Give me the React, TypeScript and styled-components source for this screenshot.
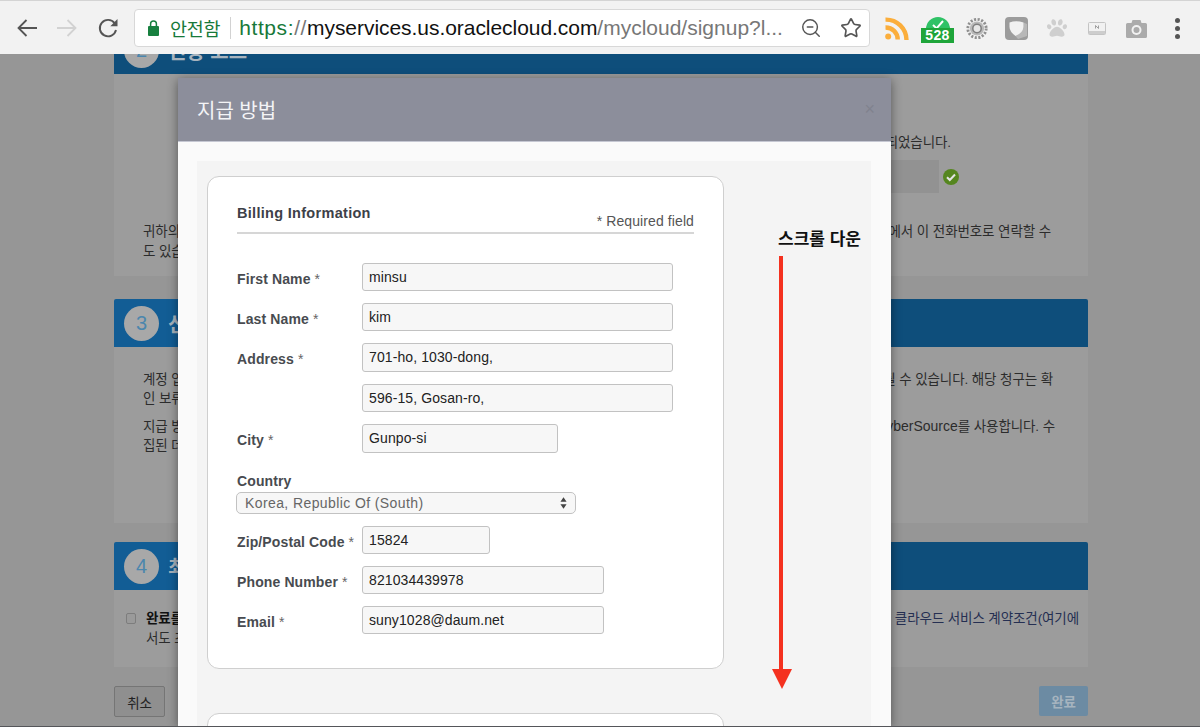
import React from 'react'
import styled, { createGlobalStyle } from 'styled-components'
import { ZoomOut, Star } from 'lucide-react'
import { FaPaw } from 'react-icons/fa'

const GlobalStyle = createGlobalStyle`
  html, body {
    margin: 0;
    padding: 0;
    overflow: hidden;
    background: #969696;
    font-family: "Liberation Sans", "Noto Sans CJK KR", sans-serif;
  }
`

const Window = styled.div`
  position: relative;
  width: 1200px;
  height: 727px;
  overflow: hidden;
  display: flex;
  flex-direction: column;
`

/* browser chrome */
const Toolbar = styled.div`
  position: relative;
  z-index: 3;
  flex: 0 0 54px;
  box-sizing: border-box;
  display: flex;
  align-items: center;
  padding: 1px 0 0 16px;
  background: #f2f2f2;
  border-top: 1px solid #d4d4d4;
`

const NavButton = styled.div<{ $gap: number }>`
  display: flex;
  margin-right: ${p => p.$gap}px;
`

const AddressBar = styled.div`
  box-sizing: border-box;
  width: 736px;
  height: 38px;
  display: flex;
  align-items: center;
  padding: 0 7px 0 13px;
  background: #fff;
  border: 1px solid #d8d8d8;
  border-radius: 4px;
`

const Secure = styled.span`
  margin-left: 11px;
  font-size: 18.5px;
  letter-spacing: -0.3px;
  color: #17793a;
`

const BarDivider = styled.span`
  width: 1px;
  height: 22px;
  margin: 0 8px 0 10px;
  background: #d2d2d2;
`

const Url = styled.div`
  flex: 1;
  font-size: 21px;
  white-space: nowrap;
  color: #777;
`

const UrlScheme = styled.span`
  letter-spacing: 0.6px;
`

const SchemeName = styled.span`
  color: #17793a;
`

const UrlHost = styled.span`
  letter-spacing: -0.05px;
  color: #111;
`

const BarIcons = styled.div`
  display: flex;
  align-items: center;
  gap: 18px;
  color: #555;
`

const Extensions = styled.div`
  display: flex;
  align-items: center;
  margin-left: 15px;
`

const ExtSlot = styled.div<{ $w: number; $mr: number }>`
  position: relative;
  display: flex;
  justify-content: center;
  width: ${p => p.$w}px;
  margin-right: ${p => p.$mr}px;
`

const CountBadge = styled.span`
  position: absolute;
  left: 0;
  top: 13px;
  width: 33px;
  height: 15px;
  background: #1ea53a;
  color: #fff;
  font-size: 14px;
  line-height: 15px;
  font-weight: 700;
  text-align: center;
  letter-spacing: 0.3px;
`

const MenuDots = styled.div`
  display: flex;
  flex-direction: column;
  gap: 3px;
  margin-left: 14px;
`

const Dot = styled.span`
  width: 5px;
  height: 5px;
  border-radius: 50%;
  background: #555;
`

/* dimmed signup page behind the dialog */
const Page = styled.div`
  flex: 1;
  min-height: 0;
  overflow: hidden;
  padding-left: 114px;
  background: #969696;
`

const Column = styled.div`
  width: 974px;
  margin-top: -28px;
`

const Banner = styled.div`
  height: 48px;
  display: flex;
  align-items: center;
  padding-left: 10px;
  background: linear-gradient(90deg, #125d95 64px, #0e4e7b 64px);
  border-radius: 2px 2px 0 0;
`

const TopBanner = styled(Banner)`
  background: #0e4e7b;
`

const StepCircle = styled.div`
  width: 35px;
  height: 35px;
  display: flex;
  align-items: center;
  justify-content: center;
  margin-right: 9px;
  border-radius: 50%;
  background: #a8a8a8;
  color: #4b86ad;
  font-size: 20px;
`

const BannerTitle = styled.span`
  font-size: 20px;
  font-weight: 700;
  color: #a8b4be;
`

const Panel = styled.div<{ $h: number; $pad: number; $after: number }>`
  box-sizing: border-box;
  height: ${p => p.$h}px;
  margin-bottom: ${p => p.$after}px;
  padding-top: ${p => p.$pad}px;
  background: #9c9c9c;
`

const TextLine = styled.div<{ $end: number; $left?: number; $mt?: number }>`
  height: 19px;
  margin-top: ${p => p.$mt ?? 0}px;
  padding: 0 ${p => p.$end}px 0 ${p => p.$left ?? 29}px;
  display: flex;
  justify-content: space-between;
  font-size: 13.5px;
  letter-spacing: -0.1px;
  line-height: 19px;
  white-space: nowrap;
  color: #2c2c2c;
`

const Latin = styled.span`
  font-size: 14px;
  letter-spacing: 0;
`

const Strong = styled.span`
  font-weight: 700;
  color: #111;
`

const TermsLink = styled.span`
  color: #252f52;
`

const VerifyRow = styled.div`
  display: flex;
  justify-content: flex-end;
  align-items: center;
  gap: 4px;
  margin-top: 8px;
  padding-right: 129px;
`

const VerifiedBox = styled.div`
  width: 200px;
  height: 33px;
  background: #929292;
`

const AgreeRow = styled.div`
  display: flex;
  align-items: flex-start;
`

const CheckBox = styled.span`
  box-sizing: border-box;
  flex: none;
  width: 10px;
  height: 11px;
  margin: 4px 0 0 12px;
  border: 1px solid #7d7d7d;
  border-radius: 2px;
  background: #9a9a9a;
`

const Actions = styled.div`
  display: flex;
  justify-content: space-between;
  align-items: flex-start;
`

const CancelButton = styled.div`
  box-sizing: border-box;
  width: 51px;
  height: 31px;
  display: flex;
  align-items: center;
  justify-content: center;
  background: #8f8f8f;
  border: 1px solid #757575;
  border-radius: 2px;
  font-size: 13.5px;
  letter-spacing: -0.1px;
  color: #222;
`

const DoneButton = styled.div`
  width: 49px;
  height: 30px;
  display: flex;
  align-items: center;
  justify-content: center;
  background: #6c8ba3;
  border-radius: 2px;
  font-size: 13.5px;
  letter-spacing: -0.1px;
  font-weight: 700;
  color: #a6b4bf;
`

/* dialog */
const Modal = styled.div`
  position: absolute;
  z-index: 2;
  left: 178px;
  top: 78px;
  width: 713px;
  height: 648px;
  display: flex;
  flex-direction: column;
  overflow: hidden;
  background: #fafafa;
  box-shadow: 0 2px 10px rgba(0, 0, 0, 0.45);
`

const ModalHead = styled.div`
  flex: 0 0 63px;
  display: flex;
  align-items: center;
  justify-content: space-between;
  padding: 0 16px 0 19px;
  background: #8c8e9b;
  border-bottom: 1px solid #c5c7d2;
`

const ModalTitle = styled.span`
  font-size: 20px;
  color: #f4f4f6;
`

const CloseMark = styled.span`
  font-size: 18px;
  color: #80828e;
`

const ModalBody = styled.div`
  flex: 1;
  min-height: 0;
  padding: 19px 20px 0 19px;
`

const Sheet = styled.div`
  height: 100%;
  padding: 15px 10px 0;
  background: #f4f4f4;
`

const SheetRow = styled.div`
  display: flex;
`

const Card = styled.div`
  box-sizing: border-box;
  width: 517px;
  height: 493px;
  padding: 28px 29px 0;
  background: #fff;
  border: 1px solid #cfcfcf;
  border-radius: 12px;
`

const NextCard = styled(Card)`
  height: 40px;
  margin-top: 44px;
`

const CardHead = styled.div`
  display: flex;
  justify-content: space-between;
  align-items: flex-end;
  height: 27px;
  margin-bottom: 29px;
  border-bottom: 2px solid #d6d6d6;
`

const CardTitle = styled.span`
  align-self: flex-start;
  font-size: 14.5px;
  line-height: 17px;
  font-weight: 700;
  letter-spacing: 0.3px;
  color: #3d4148;
`

const RequiredNote = styled.span`
  font-size: 14px;
  line-height: 22px;
  letter-spacing: 0.1px;
  color: #555;
`

const FieldRow = styled.div`
  display: flex;
  align-items: center;
  margin-bottom: 12px;
`

const FieldLabel = styled.div`
  flex: 0 0 125px;
  padding-top: 3px;
  font-size: 14px;
  font-weight: 700;
  letter-spacing: 0.12px;
  white-space: nowrap;
  color: #484b50;
`

const RequiredMark = styled.span`
  font-weight: 400;
  color: #666;
`

const FieldBox = styled.div<{ $w: number; $h?: number }>`
  box-sizing: border-box;
  width: ${p => p.$w}px;
  height: ${p => p.$h ?? 28}px;
  padding-left: 6px;
  background: #f7f7f7;
  border: 1px solid #c2c2c2;
  border-radius: 3px;
  font-size: 14px;
  line-height: 26px;
  letter-spacing: 0.1px;
  color: #222;
`

const CountryLabel = styled(FieldLabel)`
  padding-top: 0;
  line-height: 18px;
  margin-top: 19px;
  margin-bottom: 2px;
`

const SelectBox = styled.div`
  box-sizing: border-box;
  width: 340px;
  height: 22px;
  margin: 0 0 12px -1px;
  padding: 0 8px 0 8px;
  display: flex;
  align-items: center;
  justify-content: space-between;
  background: #f7f7f7;
  border: 1px solid #c2c2c2;
  border-radius: 5px;
  font-size: 14px;
  letter-spacing: 0.4px;
  color: #666;
`

/* red annotation added over the screenshot */
const ScrollHint = styled.div`
  margin: 0 0 -21px 54px;
  display: flex;
  flex-direction: column;
  align-items: flex-start;
  padding-top: 54px;
`

const ScrollText = styled.span`
  font-size: 17px;
  line-height: 20px;
  font-weight: 700;
  white-space: nowrap;
  color: #111;
`

const ScrollArrow = styled.svg`
  display: block;
  margin: 6px 0 0 -6px;
`

const BottomEdge = styled.div`
  position: absolute;
  z-index: 3;
  left: 0;
  right: 0;
  bottom: 0;
  height: 1px;
  background: #55565a;
`

const fields = [
  { label: 'First Name', value: 'minsu', w: 311 },
  { label: 'Last Name', value: 'kim', w: 311 },
  { label: 'Address', value: '701-ho, 1030-dong,', w: 311, h: 29 },
  { label: '', value: '596-15, Gosan-ro,', w: 311 },
  { label: 'City', value: 'Gunpo-si', w: 196, h: 29 },
]

const contactFields = [
  { label: 'Zip/Postal Code', value: '15824', w: 128 },
  { label: 'Phone Number', value: '821034439978', w: 242 },
  { label: 'Email', value: 'suny1028@daum.net', w: 242 },
]

const App = () => {
  return (
    <Window>
      <GlobalStyle />
      <Toolbar>
        <NavButton $gap={18}>
          <svg width="22" height="20" viewBox="0 0 22 20" fill="none" stroke="#555" strokeWidth="1.8">
            <path d="M21 10H3M10.5 2 2.5 10l8 8" />
          </svg>
        </NavButton>
        <NavButton $gap={19}>
          <svg width="22" height="20" viewBox="0 0 22 20" fill="none" stroke="#d2d2d2" strokeWidth="1.8">
            <path d="M1 10h18M11.5 2l8 8-8 8" />
          </svg>
        </NavButton>
        <NavButton $gap={15}>
          <svg width="22" height="22" viewBox="0 0 22 22" fill="none">
            <path d="M17.6 6.2A8.2 8.2 0 1 0 19 13" stroke="#555" strokeWidth="1.9" />
            <path d="M20.5 2v7.2h-7.2z" fill="#555" />
          </svg>
        </NavButton>
        <AddressBar>
          <svg width="11" height="16" viewBox="0 0 11 16">
            <path d="M2.6 6V3.8a2.9 2.9 0 0 1 5.8 0V6" fill="none" stroke="#17803f" strokeWidth="1.5" />
            <rect x="0" y="6" width="11" height="10" rx="1" fill="#17803f" />
          </svg>
          <Secure>안전함</Secure>
          <BarDivider />
          <Url>
            <UrlScheme><SchemeName>https:</SchemeName>//</UrlScheme><UrlHost>myservices.us.oraclecloud.com</UrlHost>/mycloud/signup?l...
          </Url>
          <BarIcons>
            <ZoomOut size={22} strokeWidth={1.6} />
            <Star size={22} strokeWidth={1.8} />
          </BarIcons>
        </AddressBar>
        <Extensions>
          <ExtSlot $w={24} $mr={12}>
            <svg width="24" height="23" viewBox="0 0 24 23" fill="none" stroke="#fbae3c" strokeWidth="4.4">
              <circle cx="3.2" cy="19.6" r="3" fill="#fbae3c" stroke="none" />
              <path d="M0.5 10.5a12 12 0 0 1 12.2 12" />
              <path d="M0.5 2.6a20.5 20.5 0 0 1 21 20.4" />
            </svg>
          </ExtSlot>
          <ExtSlot $w={33} $mr={12}>
            <svg width="26" height="26" viewBox="0 0 26 26">
              <path d="M1 14a12 12 0 0 1 24 0z" fill="#2fc266" />
              <path d="M8 10l3.6 3.4L18 6" fill="none" stroke="#fff" strokeWidth="2" />
            </svg>
            <CountBadge>528</CountBadge>
          </ExtSlot>
          <ExtSlot $w={22} $mr={17}>
            <svg width="23" height="23" viewBox="0 0 23 23" fill="none">
              <circle cx="11.5" cy="11.5" r="9.6" stroke="#8f8f8f" strokeWidth="3" strokeDasharray="2.2 1.6" />
              <circle cx="11.5" cy="11.5" r="7.4" fill="#b9b9b9" />
              <circle cx="11.5" cy="11.5" r="4.4" fill="#e6e6e6" stroke="#7f7f7f" strokeWidth="1.6" />
            </svg>
          </ExtSlot>
          <ExtSlot $w={23} $mr={19}>
            <svg width="23" height="23" viewBox="0 0 23 23">
              <rect width="23" height="23" rx="4" fill="#9c9c9c" />
              <path d="M18.5 5.5V10Q18 16 10.5 19L13 22 22 19V7z" fill="#b8b8b8" />
              <path d="M4.5 5.5 Q11 3 18.5 5.5 V10 Q18 16 10.5 19 Q4.5 14.5 4.5 10z" fill="#f1f1f1" />
            </svg>
          </ExtSlot>
          <ExtSlot $w={20} $mr={21}>
            <FaPaw size={20} color="#cfcfcf" />
          </ExtSlot>
          <ExtSlot $w={18} $mr={20}>
            <svg width="18" height="13" viewBox="0 0 18 13">
              <rect x="0.5" y="0.5" width="17" height="12" rx="1" fill="#f1f1f1" stroke="#c4c4c4" />
              <rect x="1" y="9" width="16" height="3" fill="#cdcdcd" />
              <path d="M7.5 6.5v-3l3 3v-3" fill="none" stroke="#8a8a8a" strokeWidth="0.8" />
            </svg>
          </ExtSlot>
          <ExtSlot $w={21} $mr={14}>
            <svg width="21" height="19" viewBox="0 0 21 19">
              <path d="M1.500 4h4L6.500 1h8l1 3h4A1.500 1.500 0 0 1 21 5.500v12a1.500 1.500 0 0 1-1.500 1.500h-18A1.500 1.500 0 0 1 0 17.500v-12A1.500 1.500 0 0 1 1.500 4z" fill="#ababab" />
              <circle cx="10.500" cy="11" r="5" fill="#f2f2f2" />
              <circle cx="10.500" cy="11" r="3" fill="#ababab" />
            </svg>
          </ExtSlot>
          <MenuDots>
            <Dot />
            <Dot />
            <Dot />
          </MenuDots>
        </Extensions>
      </Toolbar>

      <Page>
        <Column>
          <TopBanner>
            <StepCircle>2</StepCircle>
            <BannerTitle>인증 코드</BannerTitle>
          </TopBanner>
          <Panel $h={202} $pad={59} $after={23}>
            <TextLine $end={137}>
              <span />
              <span>확인되었습니다.</span>
            </TextLine>
            <VerifyRow>
              <VerifiedBox />
              <svg width="16" height="16" viewBox="0 0 16 16">
                <circle cx="8" cy="8" r="8" fill="#55861f" />
                <path d="M4 8.200l2.800 2.800L12 5.500" fill="none" stroke="#e4e4e4" strokeWidth="2" />
              </svg>
            </VerifyRow>
            <TextLine $end={37} $mt={29}>
              <span>귀하의</span>
              <span>에서 이 전화번호로 연락할 수</span>
            </TextLine>
            <TextLine $end={37} $mt={1}>
              <span>도 있습니다</span>
            </TextLine>
          </Panel>

          <Banner>
            <StepCircle>3</StepCircle>
            <BannerTitle>신용</BannerTitle>
          </Banner>
          <Panel $h={176} $pad={23} $after={19}>
            <TextLine $end={35}>
              <span>계정 업</span>
              <span>될 수 있습니다. 해당 청구는 확</span>
            </TextLine>
            <TextLine $end={35}>
              <span>인 보류</span>
            </TextLine>
            <TextLine $end={33} $mt={9}>
              <span>지급 방</span>
              <span><Latin>CyberSource</Latin>를 사용합니다. 수</span>
            </TextLine>
            <TextLine $end={33}>
              <span>집된 데</span>
            </TextLine>
          </Panel>

          <Banner>
            <StepCircle>4</StepCircle>
            <BannerTitle>최종</BannerTitle>
          </Banner>
          <Panel $h={77} $pad={19} $after={19}>
            <AgreeRow>
              <CheckBox />
              <TextLine $end={9} $left={10} style={{ flex: 1 }}>
                <Strong>완료를</Strong>
                <TermsLink>클라우드 서비스 계약조건(여기에</TermsLink>
              </TextLine>
            </AgreeRow>
            <TextLine $end={9} $left={32} $mt={1}>
              <span>서도 조</span>
            </TextLine>
          </Panel>

          <Actions>
            <CancelButton>취소</CancelButton>
            <DoneButton>완료</DoneButton>
          </Actions>
        </Column>
      </Page>

      <Modal>
        <ModalHead>
          <ModalTitle>지급 방법</ModalTitle>
          <CloseMark>×</CloseMark>
        </ModalHead>
        <ModalBody>
          <Sheet>
            <SheetRow>
              <Card>
                <CardHead>
                  <CardTitle>Billing Information</CardTitle>
                  <RequiredNote>* Required field</RequiredNote>
                </CardHead>
                {fields.map(f => (
                  <FieldRow key={f.value}>
                    <FieldLabel>
                      {f.label}
                      {f.label && <RequiredMark> *</RequiredMark>}
                    </FieldLabel>
                    <FieldBox $w={f.w} $h={f.h}>{f.value}</FieldBox>
                  </FieldRow>
                ))}
                <CountryLabel>Country</CountryLabel>
                <SelectBox>
                  Korea, Republic Of (South)
                  <svg width="7" height="12" viewBox="0 0 8 13" fill="#444">
                    <path d="M4 0l3.500 5h-7zM4 13l3.500-5h-7z" />
                  </svg>
                </SelectBox>
                {contactFields.map(f => (
                  <FieldRow key={f.value}>
                    <FieldLabel>
                      {f.label}
                      <RequiredMark> *</RequiredMark>
                    </FieldLabel>
                    <FieldBox $w={f.w}>{f.value}</FieldBox>
                  </FieldRow>
                ))}
              </Card>
              <ScrollHint>
                <ScrollText>스크롤 다운</ScrollText>
                <ScrollArrow width="20" height="434" viewBox="0 0 20 434">
                  <rect x="7" y="0" width="4" height="415" fill="#f4311f" />
                  <path d="M0 413h20l-10 20z" fill="#f4311f" />
                </ScrollArrow>
              </ScrollHint>
            </SheetRow>
            <NextCard />
          </Sheet>
        </ModalBody>
      </Modal>
      <BottomEdge />
    </Window>
  )
}

export default App
